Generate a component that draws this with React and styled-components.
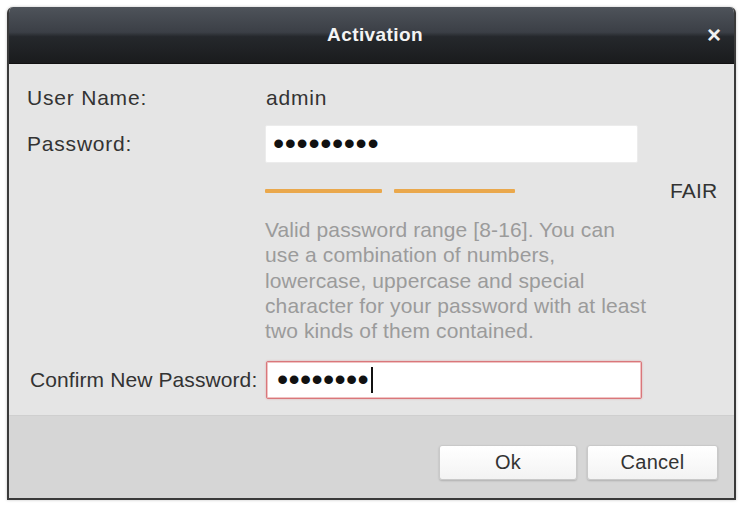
import React from 'react';
import styled, { createGlobalStyle } from 'styled-components';

const GlobalStyle = createGlobalStyle`
  body {
    margin: 0;
    background: #ffffff;
    font-family: "Liberation Sans", Arial, sans-serif;
  }
`;

const Page = styled.div`
  padding: 7px 4px 6px 7px;
`;

const Dialog = styled.div`
  width: 725px;
  border: 2px solid #3a3a3a;
  border-top: none;
  border-radius: 6px 6px 0 0;
  box-shadow: 0 0 3px rgba(0, 0, 0, 0.25);
  overflow: hidden;
`;

const TitleBar = styled.div`
  height: 56px;
  display: grid;
  grid-template-columns: 1fr auto 1fr;
  align-items: center;
  padding: 0 13px 0 18px;
  background: linear-gradient(
    to bottom,
    #4e535a 0%,
    #3b3f46 45%,
    #25282c 53%,
    #1a1b1d 100%
  );
  border-bottom: 1px solid #111;
`;

const Title = styled.div`
  grid-column: 2;
  color: #f4f4f4;
  font-size: 19px;
  font-weight: bold;
  letter-spacing: 0.4px;
  padding-left: 2px;
`;

const Close = styled.div`
  grid-column: 3;
  justify-self: end;
  color: #f0f0f0;
  font-size: 24px;
  font-weight: bold;
  line-height: 1;
`;

const Body = styled.div`
  background: #e5e5e5;
  padding: 17px 16px 16px 18px;
  display: grid;
  grid-template-columns: 238px 377px 1fr;
  align-items: center;
  color: #333;
  font-size: 21px;
  letter-spacing: 0.8px;
`;

const Label = styled.div`
  grid-column: 1;
  height: ${({ $h }) => $h || 38}px;
  margin-top: ${({ $mt }) => $mt || 0}px;
  display: flex;
  align-items: center;
  padding-left: ${({ $indent }) => $indent || 0}px;
  letter-spacing: ${({ $tight }) => ($tight ? '0.1px' : 'inherit')};
  white-space: nowrap;
`;

const Value = styled.div`
  grid-column: 2;
  margin-top: ${({ $mt }) => $mt || 0}px;
  height: 34px;
  display: flex;
  align-items: center;
  padding-left: 1px;
`;

const Field = styled.div`
  grid-column: 2;
  box-sizing: border-box;
  height: 38px;
  width: ${({ $w }) => $w}px;
  margin-top: ${({ $mt }) => $mt || 0}px;
  margin-left: ${({ $ml }) => $ml || 0}px;
  background: #fff;
  display: flex;
  align-items: center;
  padding-left: ${({ $pl }) => $pl || 7}px;
  border: ${({ $error }) => ($error ? '1px solid #d9777b' : '1px solid #ececec')};
  border-radius: 2px;
  box-shadow: ${({ $error }) =>
    $error ? 'inset 0 0 0 1px #f1c3c3, 0 0 2px rgba(215, 90, 90, 0.45)' : 'none'};
`;

const Dots = styled.span`
  font-size: 32px;
  line-height: 1;
  color: #111;
  letter-spacing: ${({ $ls }) => $ls}px;
  transform: translateY(-1px);
`;

const Caret = styled.span`
  width: 2px;
  height: 26px;
  margin-left: 2px;
  background: #111;
`;

const Strength = styled.div`
  grid-column: 2;
  margin-top: 16px;
  height: 24px;
  display: flex;
  align-items: center;
  gap: 12px;
`;

const Bar = styled.div`
  width: ${({ $w }) => $w}px;
  height: 4px;
  border-radius: 1px;
  background: #eaa84c;
`;

const Level = styled.div`
  grid-column: 3;
  margin-top: 16px;
  height: 24px;
  display: flex;
  align-items: center;
  padding-left: 28px;
  letter-spacing: 0.2px;
`;

const Hint = styled.div`
  grid-column: 2 / span 2;
  margin-top: 14px;
  color: #9b9b9b;
  line-height: 25.3px;
  letter-spacing: 0.1px;
  white-space: nowrap;
`;

const Footer = styled.div`
  background: #d6d6d6;
  border-top: 1px solid #cfcfcf;
  padding: 29px 16px 18px;
  display: flex;
  justify-content: flex-end;
  gap: 10px;
`;

const Button = styled.button`
  width: ${({ $w }) => $w}px;
  height: 35px;
  border: 1px solid #c9c9c9;
  border-radius: 3px;
  background: linear-gradient(to bottom, #ffffff 0%, #f3f3f3 100%);
  box-shadow: 0 1px 2px rgba(0, 0, 0, 0.18);
  font-family: "Liberation Sans", Arial, sans-serif;
  font-size: 20px;
  letter-spacing: 0.3px;
  color: #333;
  padding: 0;
`;

const hintLines = [
  'Valid password range [8-16]. You can',
  'use a combination of numbers,',
  'lowercase, uppercase and special',
  'character for your password with at least',
  'two kinds of them contained.',
];

export default function App() {
  return (
    <>
      <GlobalStyle />
      <Page>
        <Dialog>
          <TitleBar>
            <Title>Activation</Title>
            <Close>×</Close>
          </TitleBar>
          <Body>
            <Label $h={34}>User Name:</Label>
            <Value>admin</Value>

            <Label $mt={10}>Password:</Label>
            <Field $mt={10} $w={373}>
              <Dots $ls={0.6}>•••••••••</Dots>
            </Field>

            <Strength>
              <Bar $w={117} />
              <Bar $w={121} />
            </Strength>
            <Level>FAIR</Level>

            <Hint>
              {hintLines.map((line) => (
                <div key={line}>{line}</div>
              ))}
            </Hint>

            <Label $mt={18} $indent={3} $tight>Confirm New Password:</Label>
            <Field $mt={18} $ml={1} $w={376} $pl={10} $error>
              <Dots $ls={0.3}>••••••••</Dots>
              <Caret />
            </Field>
          </Body>
          <Footer>
            <Button $w={138}>Ok</Button>
            <Button $w={131}>Cancel</Button>
          </Footer>
        </Dialog>
      </Page>
    </>
  );
}
